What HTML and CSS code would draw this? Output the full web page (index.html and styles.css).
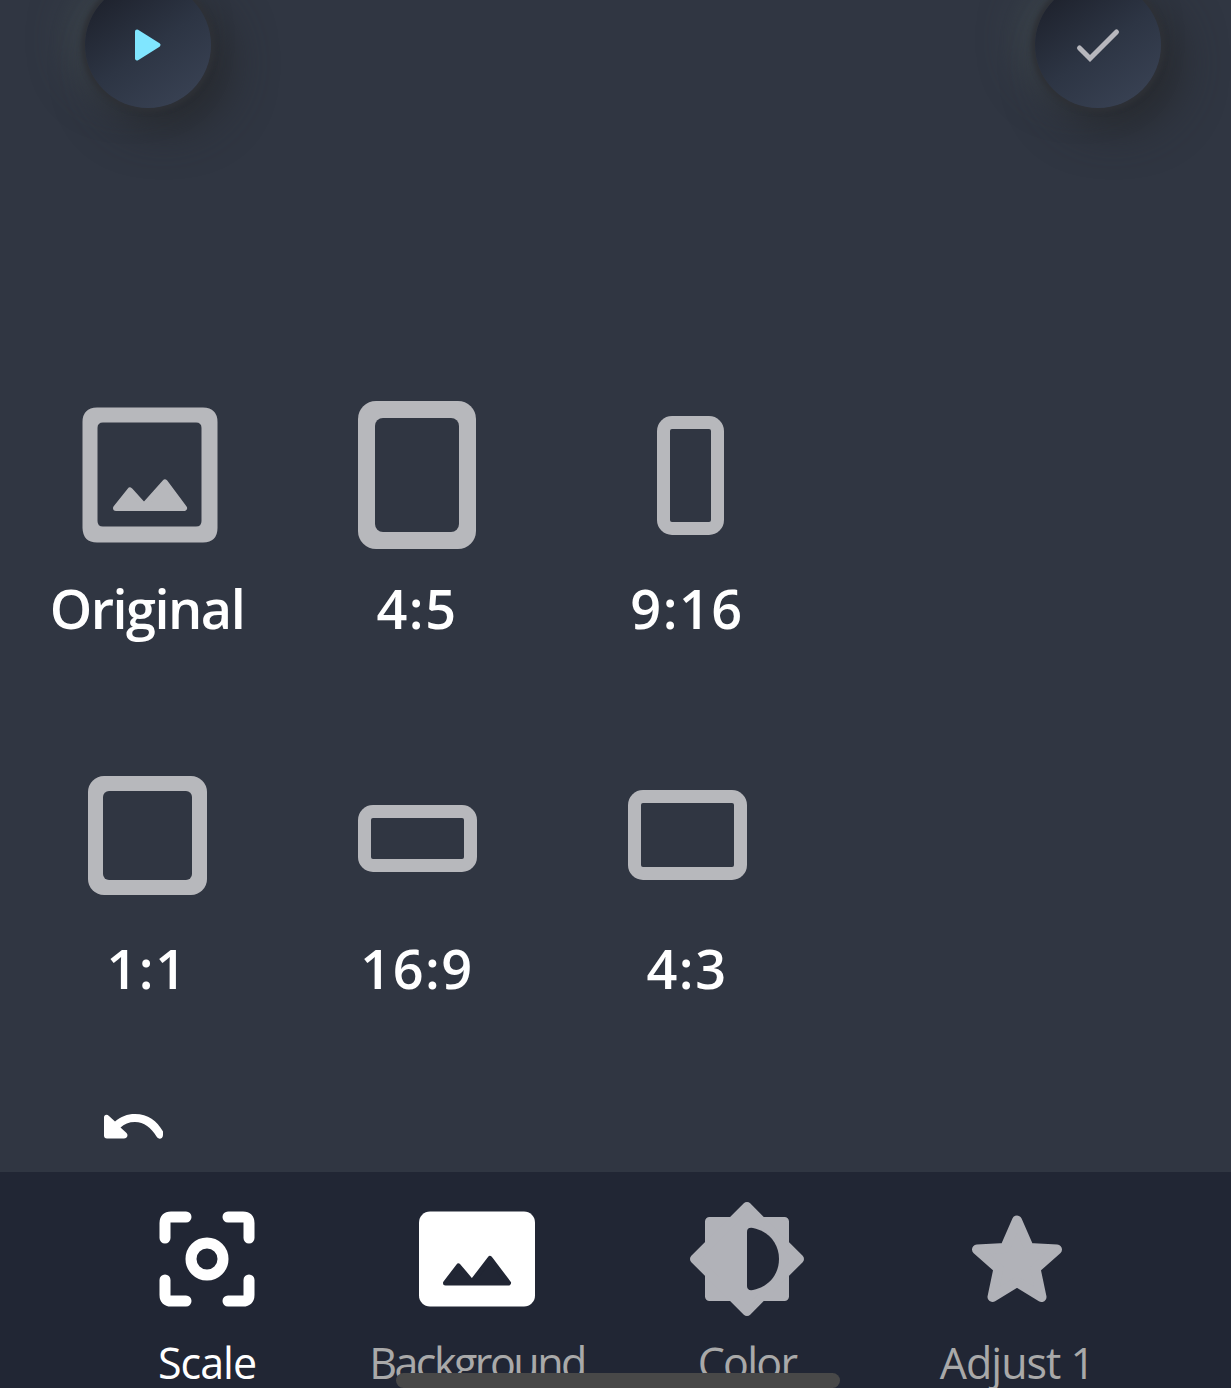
FILE: index.html
```
<!DOCTYPE html>
<html lang="en">
<head>
<meta charset="utf-8">
<title>Scale</title>
<link rel="stylesheet" href="styles.css">
</head>
<body>
<div class="app">
  <header class="top">
    <button class="round" aria-label="Play"><svg width="126" height="126" viewBox="0 0 126 126"><path d="M52 49.500L73.500 63L52 76.500Z" fill="#80e6ff" stroke="#80e6ff" stroke-width="4" stroke-linejoin="round"/></svg></button>
    <button class="round" aria-label="Done"><svg width="126" height="126" viewBox="0 0 126 126"><path d="M44.500 66L55 76.500L81.500 50" fill="none" stroke="#b7b7bd" stroke-width="5" stroke-linecap="round"/></svg></button>
  </header>
  <main class="ratios">
    <div class="ratio"><div class="pic original"><svg width="136" height="136" viewBox="0 0 136 136"><path fill-rule="evenodd" d="M15 .5H121Q135.500 1 135.500 15V121Q135.500 135 121 135.500H15Q1 135.500 .5 121V15Q.5 1 15 .5ZM21 15.500Q15.500 15.500 15.500 21V114Q15.500 119.500 21 119.500H114Q119.500 119.500 119.500 114V21Q119.500 15.500 114 15.500Z" fill="#b7b8bc"/><path d="M34 101L48 83.500L62 99L83 75.500L102 101Z" fill="#b7b8bc" stroke="#b7b8bc" stroke-width="6" stroke-linejoin="round"/></svg></div><span class="name original-name">Original</span></div>
    <div class="ratio"><div class="pic"><i class="frame f45"></i></div><span class="name">4:5</span></div>
    <div class="ratio"><div class="pic nine"><i class="frame f916"></i></div><span class="name">9:16</span></div>
    <div class="ratio"><div class="pic"><i class="frame f11"></i></div><span class="name">1:1</span></div>
    <div class="ratio"><div class="pic wide"><i class="frame f169"></i></div><span class="name">16:9</span></div>
    <div class="ratio"><div class="pic"><i class="frame f43"></i></div><span class="name">4:3</span></div>
  </main>
  <div class="undo"><svg width="60" height="26" viewBox="0 0 60 26"><path d="M0 3.500C0 .5 3 0 5 2L11 7.500C17 2.500 23 0 31 0C44 0 53 7 59 17.500V21C59 25 54.500 26 52.500 22.500C47 13.500 40 8 31 8C25 8 20 10 16.500 13.500L22 18.500C25 21 23 24.500 20 24.500H3Q0 24.500 0 21.500Z" fill="#fff"/></svg></div>
  <nav class="nav">
    <div class="tab on"><div class="glyph"><svg width="96" height="96" viewBox="0 0 96 96" fill="none" stroke="#fff" stroke-width="11" stroke-linecap="round" stroke-linejoin="round"><path d="M6 27V12Q6 6 12 6H27M69 6H84Q90 6 90 12V27M90 69V84Q90 90 84 90H69M27 90H12Q6 90 6 84V69"/><circle cx="48" cy="48" r="16"/></svg></div><span class="cap cap-scale">Scale</span></div>
    <div class="tab"><div class="glyph"><svg width="116" height="96" viewBox="0 0 116 96"><rect y=".5" width="116" height="95" rx="11" fill="#fff"/><path d="M26.500 72L39.500 55L53 71L71 47.500L89.500 72Z" fill="#212634" stroke="#212634" stroke-width="5" stroke-linejoin="round"/></svg></div><span class="cap cap-background">Background</span></div>
    <div class="tab"><div class="glyph"><svg width="116" height="116" viewBox="0 0 116 116"><g fill="#b1b2b8" stroke="#b1b2b8" stroke-width="9" stroke-linejoin="round"><path d="M20.500 20.500H95.500V95.500H20.500Z"/><path d="M58 5.500L110.500 58L58 110.500L5.500 58Z"/></g><path d="M58 31Q58 26 64 27C79 30 90 42 90 58S79 86 64 89Q58 90 58 85Z" fill="#212634"/></svg></div><span class="cap cap-color">Color</span></div>
    <div class="tab"><div class="glyph"><svg width="92" height="88" viewBox="0 0 92 88"><path d="M46 5.500L58 33L86 34.500L64.500 53.500L70.500 82L46 67L21.500 82L27.500 53.500L6 34.500L34 33Z" fill="#b1b2b8" stroke="#b1b2b8" stroke-width="10" stroke-linejoin="round"/></svg></div><span class="cap cap-adjust">Adjust 1</span></div>
    <div class="home"></div>
  </nav>
</div>
</body>
</html>
```
FILE: styles.css
```
body { margin: 0; background: #303642; font-family: "Trebuchet MS", "Open Sans", sans-serif; color: #fff; }
.app { width: 1231px; height: 1388px; overflow: hidden; display: flex; flex-direction: column; }
svg { display: block; }
.top { height: 295px; flex: none; display: flex; justify-content: space-between; align-items: flex-start; padding: 0 70px 0 85px; box-sizing: border-box; }
.round { margin: -18px 0 0; padding: 0; border: 0; width: 126px; height: 126px; border-radius: 50%; background: linear-gradient(145deg, #1e222d 12%, #2d3544 52%, #3a4355 95%); box-shadow: 0 0 4px 4px #2e3137, 16px 18px 45px 2px rgba(36, 39, 42, .85), -18px -6px 36px rgba(68, 78, 84, .6); }
.ratios { flex: none; height: 720px; display: grid; grid-template-columns: repeat(3, 270px); grid-template-rows: 360px 360px; padding-left: 12px; }
.ratio { display: flex; flex-direction: column; align-items: center; padding-top: 90px; box-sizing: border-box; }
.pic { height: 180px; display: flex; align-items: center; flex: none; }
.original { padding-left: 5px; }
.nine { padding-left: 7px; }
.wide { padding-top: 7px; height: 173px; }
.frame { display: flex; box-sizing: border-box; padding: 13px; border-radius: 15px; background: #b7b8bc; }
.frame::before { content: ""; flex: 1; border-radius: 2px; background: #303642; }
.f45 { width: 118px; height: 148px; padding: 17px; border-radius: 18px; }
.f45::before { border-radius: 8px; }
.f916 { width: 67px; height: 119px; }
.f11 { width: 119px; height: 119px; padding: 15px; border-radius: 16px; }
.f11::before { border-radius: 6px; }
.f169 { width: 119px; height: 67px; }
.f43 { width: 119px; height: 90px; }
.name { font-size: 54px; line-height: 90px; margin-top: -2px; font-weight: 600; letter-spacing: 1.500px; white-space: nowrap; }
.original-name { letter-spacing: -1.500px; }
.undo { flex: none; height: 157px; padding: 99px 0 0 104px; box-sizing: border-box; }
.nav { position: relative; flex: none; height: 216px; display: grid; grid-template-columns: repeat(4, 270px); padding-left: 72px; background: #212634; }
.tab { display: flex; flex-direction: column; align-items: center; color: #a9a9a9; }
.on { color: #fff; }
.glyph { height: 174px; display: flex; align-items: center; flex: none; }
.cap { font-size: 43px; line-height: 50px; margin-top: -8px; white-space: nowrap; }
.cap-scale { letter-spacing: -1px; }
.cap-background { letter-spacing: -2.500px; }
.cap-color { letter-spacing: -1.700px; }
.cap-adjust { letter-spacing: -1px; }
.home { position: absolute; left: 396px; bottom: 0; width: 444px; height: 15px; border-radius: 8px; background: #484848; }
```
